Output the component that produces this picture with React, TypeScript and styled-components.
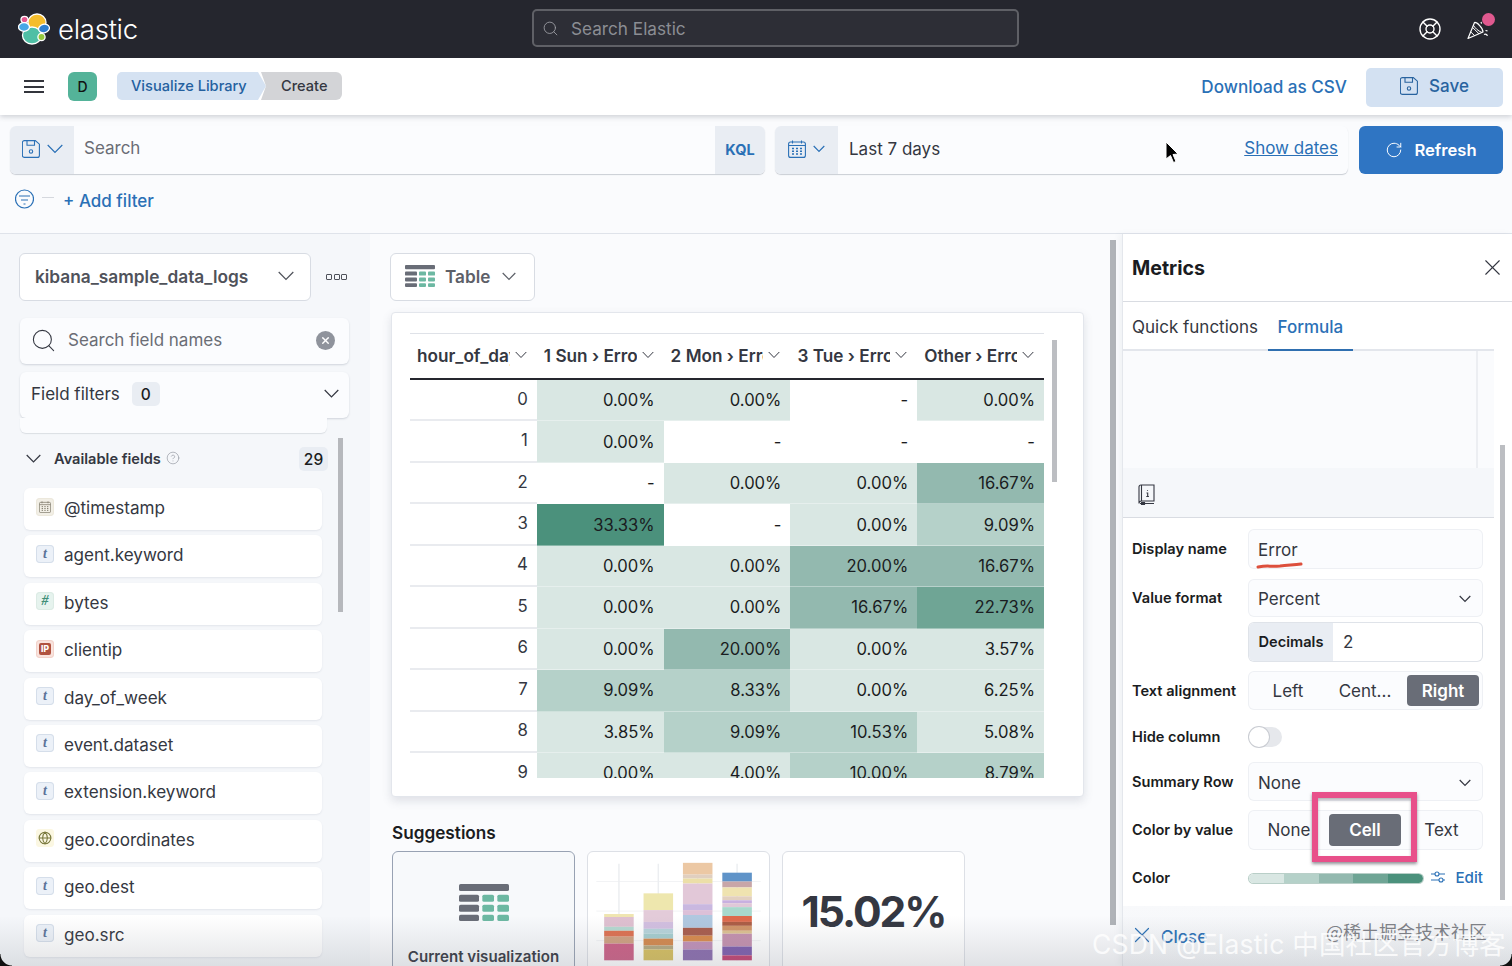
import React from 'react';
import styled, { createGlobalStyle } from 'styled-components';
import { LifeBuoy, RotateCw, Search, X, CircleHelp, Globe } from 'lucide-react';

const Global = createGlobalStyle`
  html, body { margin: 0; padding: 0; height: 100%; overflow: hidden; background: #fafbfd; }
  * { box-sizing: border-box; }
  body { font-family: Inter, "Noto Sans CJK SC", sans-serif; color: #343741; }
`;

const Page = styled.div`position: relative; width: 1512px; height: 966px; overflow: hidden; display: flex; flex-direction: column;`;

const Header = styled.header`height: 58px; background: #25262e; display: flex; align-items: center; padding: 0 18px; position: relative; flex: none;`;
const Brand = styled.div`display: flex; align-items: center; gap: 8px; width: 514px; color: #fff; font-size: 27.6px; font-weight: 300; letter-spacing: -0.3px;`;
const GlobalSearch = styled.div`width: 487px; height: 38px; margin-top: -2px; border: 2px solid #5f6066; border-radius: 5px; background: #2d2e36; display: flex; align-items: center; padding: 0 8px; gap: 12px; color: #8b8d93; font-size: 17.2px;`;
const HeaderIcons = styled.div`margin-left: auto; display: flex; align-items: center; gap: 25px; color: #fff; padding-right: 5px;`;
const BellWrap = styled.div`position: relative; display: flex;`;
const Dot = styled.span`position: absolute; width: 13px; height: 13px; right: -6px; top: -5px; border-radius: 50%; background: #e0598f;`;

const SubNav = styled.div`height: 57px; background: #fff; display: flex; align-items: center; padding: 0 9px 0 24px; box-shadow: 0 2px 5px rgba(60,65,80,.22); position: relative; z-index: 2; flex: none;`;
const Burger = styled.div`width: 20px; height: 13px; border-top: 2px solid #33353c; border-bottom: 2px solid #33353c; position: relative; margin-right: 24px;
  &::after { content: ''; position: absolute; left: 0; right: 0; top: 3.5px; height: 2px; background: #33353c; }`;
const Avatar = styled.div`width: 29px; height: 29px; background: #54b399; border-radius: 6px; display: flex; align-items: center; justify-content: center; color: #111; font-size: 14px; font-weight: 500; margin-right: 20px;`;
const Crumbs = styled.div`display: flex; height: 28px; margin-top: -1px; line-height: 26px;`;
const CrumbA = styled.div`width: 149px; background: #d5e2f2; color: #24609f; font-size: 14.6px; font-weight: 500; display: flex; align-items: center; padding: 0 0 1px 14px; border-radius: 5px 0 0 5px; clip-path: polygon(0 0, 141px 0, 100% 50%, 141px 100%, 0 100%);`;
const CrumbB = styled.div`width: 81px; margin-left: -5px; background: #d3d4d7; color: #343741; font-size: 14.6px; font-weight: 500; display: flex; align-items: center; padding: 0 0 1px 20px; border-radius: 0 6px 6px 0; clip-path: polygon(0 0, 100% 0, 100% 100%, 0 100%, 5px 50%);`;
const CsvLink = styled.div`margin-left: auto; color: #2a70b6; font-size: 17.1px; font-weight: 500; margin-right: 19px;`;
const SaveBtn = styled.div`width: 137px; height: 39px; background: #d3e1f2; border-radius: 5px; color: #28639f; font-size: 17px; font-weight: 500; display: flex; align-items: center; justify-content: center; gap: 11px; margin-top: 1px; padding-bottom: 2px;`;

const QueryArea = styled.div`height: 119px; background: #fafbfd; border-bottom: 1px solid #dfe3ea; padding: 11px 9px 0 10px; flex: none;`;
const QueryRow = styled.div`display: flex; height: 48px; gap: 10px;`;
const QueryGroup = styled.div<{ $w: number }>`display: flex; width: ${p => p.$w}px; height: 48px; border-radius: 6px; overflow: hidden; box-shadow: 0 1px 1px rgba(90,100,120,.3); background: #fbfcfe;`;
const Prepend = styled.div<{ $w: number }>`width: ${p => p.$w}px; background: #e9edf3; display: flex; align-items: center; justify-content: center; gap: 7px; color: #2a70b6; font-size: 14.5px; font-weight: 700; flex: none; padding-bottom: 2px;`;
const QueryInput = styled.div`flex: 1; display: flex; align-items: center; padding-left: 10px; color: #6a6d75; font-size: 17px; margin-top: -4px;`;
const DateText = styled.div`flex: 1; display: flex; align-items: center; padding: 0 11px; color: #343741; font-size: 17px; margin-top: -3px;`;
const ShowDates = styled.div`color: #2a70b6; font-size: 17px; text-decoration: underline; margin-right: 10px; display: flex; align-items: center; margin-top: -4px;`;
const RefreshBtn = styled.div`width: 144px; height: 48px; background: #2f75c3; border-radius: 6px; color: #fff; font-size: 16.6px; font-weight: 600; display: flex; align-items: center; justify-content: center; gap: 11px; margin-left: 1px;`;
const FilterRow = styled.div`display: flex; align-items: center; margin: 14px 0 0 5px; height: 22px; color: #2a70b6;`;
const Dash = styled.span`width: 12px; height: 1px; background: #d5d8de; margin: 0 9px 0 8px; position: relative; top: -2px;`;
const AddFilter = styled.span`font-size: 17px; font-weight: 500; position: relative; top: 2px;`;

const Main = styled.div`flex: 1; display: grid; grid-template-columns: 370px 752px 390px; min-height: 0; position: relative;`;

const Side = styled.aside`background: #f5f7fa; padding: 19px 21px 0 19px; position: relative; overflow: hidden;`;
const IndexRow = styled.div`display: flex; align-items: center; height: 48px;`;
const IndexPicker = styled.div`width: 292px; height: 48px; background: #fff; border: 1px solid #d8dce3; border-radius: 6px; display: flex; align-items: center; justify-content: space-between; padding: 0 16px 2px 15px; font-size: 17.3px; font-weight: 600; color: #4f525a;`;
const Dots = styled.div`display: flex; gap: 1.5px; margin-left: 15px;
  & span { width: 6px; height: 6px; border: 1.5px solid #4f525a; border-radius: 1px; }`;
const SearchBox = styled.div`margin: 17px 0 0 1px; height: 46px; width: 329px; background: #fbfcfe; border-radius: 6px; box-shadow: 0 1px 2px rgba(100,110,130,.25); display: flex; align-items: center; padding: 0 14px 2px 10px; gap: 11px; color: #6a6d75; font-size: 17px;`;
const ClearDot = styled.span`margin-left: auto; width: 19px; height: 19px; background: #8f939c; border-radius: 50%; display: flex; align-items: center; justify-content: center; color: #fff;`;
const FilterBox = styled(SearchBox)`margin-top: 8px; padding: 0 10px 2px 11px; color: #343741; gap: 12px; justify-content: flex-start;`;
const CountBadge = styled.span`background: #e9edf3; border-radius: 5px; font-size: 15.5px; font-weight: 500; color: #1a1c21; display: inline-flex; align-items: center; justify-content: center; height: 24px; min-width: 28px; padding: 0 4px;`;
const ChevEnd = styled.span`margin-left: auto; display: flex; color: #343741;`;
const Fragment_ = styled.div`margin: 0 0 0 1px; width: 307px; height: 15px; background: #fbfcfe; border-radius: 0 0 6px 6px; box-shadow: 0 1px 1px rgba(100,110,130,.18);`;
const AvailRow = styled.div`display: flex; align-items: center; width: 302px; margin: 14px 0 0 7px; height: 24px;`;
const AvailTitle = styled.span`font-size: 14.6px; font-weight: 600; color: #343741; margin-left: 13px; position: relative; top: 0;`;
const Help = styled.span`display: flex; margin-left: 5px; color: #8f939c; position: relative; top: -1px;`;
const AvailBadge = styled(CountBadge)`margin-left: auto; background: #e9edf3; min-width: 29px;`;
const FieldList = styled.div`display: flex; flex-direction: column; gap: 5.4px; margin: 17px 0 0 5px; width: 298px;`;
const FieldItem = styled.div`height: 42px; background: #fff; border-radius: 6px; box-shadow: 0 1px 2px rgba(100,110,130,.12); display: flex; align-items: center; padding: 0 0 3px 12px; gap: 10px; font-size: 17.1px; color: #343741;`;
const FieldToken = styled.span<{ $bg: string; $bd: string; $fg: string }>`width: 18px; height: 18px; flex: none; border-radius: 4px; background: ${p => p.$bg}; box-shadow: inset 0 0 0 1px ${p => p.$bd}; color: ${p => p.$fg}; display: flex; align-items: center; justify-content: center; font-family: "Liberation Serif", serif; font-size: 14px; font-weight: 700; font-style: italic; position: relative; top: -1px;`;
const IpGlyph = styled.span`background: #b0523f; color: #fff; width: 12px; height: 12px; border-radius: 2px; font-family: Inter, sans-serif; font-style: normal; font-size: 8.5px; font-weight: 800; display: flex; align-items: center; justify-content: center;`;
const SideScroll = styled.div`position: absolute; left: 338px; top: 204px; width: 5px; height: 174px; background: #b6b8bc;`;

const Center = styled.section`background: #fafbfd; padding: 19px 0 0 21px; position: relative; overflow: hidden;`;
const ChartType = styled.div`width: 145px; height: 48px; margin-left: -1px; background: #fff; border: 1px solid #d8dce3; border-radius: 6px; display: flex; align-items: center; padding: 0 15px 2px 14px; font-size: 17.2px; font-weight: 600; color: #5d6068; gap: 10px;
  & > svg:last-child { margin-left: 2px; }`;
const Card = styled.div`margin-top: 11px; width: 693px; height: 485px; background: #fff; border: 1px solid #e3e6ec; border-radius: 4px; box-shadow: 0 4px 10px rgba(80,90,110,.16); padding: 20px 0 0 18px; position: relative; overflow: hidden;`;
const TableWrap = styled.div`width: 634px; height: 445px; overflow: hidden;`;
const HeadRow = styled.div`display: grid; grid-template-columns: repeat(5, 126.8px); height: 47px; border-top: 1px solid #dfe2e8; border-bottom: 2px solid #25262e;`;
const HeadCell = styled.div`display: flex; align-items: center; padding: 0 10px 0 7px; font-size: 17.2px; font-weight: 600; color: #343741; gap: 5px; position: relative; top: -1px;`;
const HeadText = styled.span`flex: 1; min-width: 0; overflow: hidden; white-space: nowrap;`;
const BodyRow = styled.div`display: grid; grid-template-columns: repeat(5, 126.8px); height: 41.45px;`;
const RowHead = styled.div`border-bottom: 2px solid #e9ebef; display: flex; align-items: center; justify-content: flex-end; padding: 0 9px 2px 0; font-size: 16.8px; color: #343741;`;
const LEVELS = ['#fff', '#d9e7e3', '#b5d1c9', '#93b9af', '#6fa595', '#4b917c'];
const Cell = styled.div<{ $level: number }>`background: ${p => LEVELS[p.$level]}; display: flex; align-items: center; justify-content: flex-end; padding: 0 9px 1px 0; font-size: 16.6px; color: #1a1c21; box-shadow: inset 0 -1px 0 rgba(255,255,255,.35);`;
const TableScroll = styled.div`position: absolute; left: 660px; top: 27px; width: 5px; height: 142px; background: #bcbec2;`;
const SugTitle = styled.h3`margin: 25px 0 0 1px; font-size: 17.2px; line-height: 22px; font-weight: 600; color: #1a1c21;`;
const Suggestions = styled.div`display: flex; gap: 12px; margin: 7px 0 0 1px;`;
const SugCard = styled.div<{ $active?: boolean }>`width: 183px; height: 130px; border-radius: 6px; background: ${p => (p.$active ? '#f7f9fb' : '#fff')}; border: 1px solid ${p => (p.$active ? '#98a2b3' : '#dde0e6')}; display: flex; flex-direction: column; align-items: center; position: relative; overflow: hidden; flex: none;`;
const IconGap = styled.div`height: 32px; flex: none;`;
const SugLabel = styled.div`font-size: 15.1px; font-weight: 600; color: #343741; margin-top: 26px; white-space: nowrap;`;
const Metric = styled.div`font-size: 42.5px; font-weight: 700; color: #343741; margin-top: 28px; line-height: 64px; letter-spacing: -2px;`;
const MainScroll = styled.div`position: absolute; left: 740px; top: 6px; width: 6px; height: 685px; background: #b0b3b8;`;

const Panel = styled.section`background: #fff; border-left: 1px solid #e4e7ec; position: relative; overflow: hidden; display: flex; flex-direction: column; box-shadow: -3px 0 6px rgba(90,100,120,.06);`;
const PanelHead = styled.div`height: 68px; border-bottom: 1px solid #d9dce2; display: flex; align-items: center; justify-content: space-between; padding: 0 6px 0 9px; font-size: 19.6px; font-weight: 700; color: #1a1c21; flex: none;`;
const Tabs = styled.div`height: 49px; width: 371px; border-bottom: 2px solid #e3e6ec; display: flex; padding-left: 9px; flex: none; font-size: 17px; color: #343741; gap: 10px;`;
const Tab = styled.div<{ $on?: boolean }>`height: 49px; padding: ${p => (p.$on ? '2px 9.5px 0' : '0')}; display: flex; align-items: center; color: ${p => (p.$on ? '#2a70b6' : '#343741')}; font-weight: ${p => (p.$on ? 500 : 400)}; border-bottom: ${p => (p.$on ? '2px solid #2f6fb0' : 'none')};`;
const Editor = styled.div`height: 117px; width: 371px; background: #fafbfd; flex: none; padding-right: 16px;`;
const EditorInner = styled.div`height: 100%; border-right: 2px solid #eceef2;`;
const EditorBar = styled.div`height: 50px; width: 371px; background: #f5f7fa; border-bottom: 1px solid #d9dce2; display: flex; align-items: center; padding: 3px 0 0 15px; flex: none;`;
const Form = styled.div`padding: 12px 0 0 9px; display: flex; flex-direction: column;`;
const FormRow = styled.div<{ $h: number; $mt: number }>`display: grid; grid-template-columns: 117px 233px; column-gap: 0; align-items: center; height: ${p => p.$h}px; margin-top: ${p => p.$mt}px;`;
const Label = styled.div`font-size: 14.6px; font-weight: 600; color: #1a1c21; white-space: nowrap;`;
const Field = styled.div<{ $between?: boolean }>`height: 100%; background: #fbfcfe; border-radius: 5px; box-shadow: 0 0 0 1px #eef0f4; display: flex; align-items: center; justify-content: ${p => (p.$between ? 'space-between' : 'flex-start')}; padding: 2px 11px 0 9px; font-size: 17px; color: #343741; position: relative;`;
const Decimal = styled.div`height: 100%; border-radius: 5px; background: #fff; box-shadow: 0 0 0 1px #dfe3e9; display: flex; align-items: center; overflow: hidden; font-size: 17px; color: #343741;`;
const DecimalTag = styled.div`height: 100%; width: 84px; background: #e9edf3; display: flex; align-items: center; justify-content: center; font-size: 14.6px; font-weight: 600; color: #1a1c21; margin-right: 10px;`;
const Seg = styled.div<{ $cols: string; $pad: string }>`height: 100%; border-radius: 5px; background: #fbfcfe; box-shadow: 0 0 0 1px #eef0f4; display: grid; grid-template-columns: ${p => p.$cols}; padding: ${p => p.$pad}; font-size: 17px;`;
const SegBtn = styled.div<{ $on?: boolean }>`border-radius: 4px; display: flex; align-items: center; justify-content: center; background: ${p => (p.$on ? '#696d77' : 'transparent')}; color: ${p => (p.$on ? '#fff' : '#343741')}; font-weight: ${p => (p.$on ? 600 : 400)};`;
const Toggle = styled.div`width: 33px; height: 20px; border-radius: 10px; background: #e6e8ec; position: relative;
  &::after { content: ''; position: absolute; left: 0; top: 0; width: 20px; height: 20px; border-radius: 50%; background: #fff; box-shadow: 0 0 0 1px #c9ccd2; }`;
const ColorCell = styled.div`display: flex; align-items: center; justify-content: flex-start;`;
const Ramp = styled.div`width: 174px; height: 9px; border-radius: 5px; overflow: hidden; display: grid; grid-template-columns: repeat(5, 1fr); box-shadow: 0 0 0 1px #b9cfc8;`;
const RampStop = styled.span<{ $level: number }>`background: ${p => LEVELS[p.$level]};`;
const EditLink = styled.div`margin-left: auto; margin-right: -1px; display: flex; align-items: center; gap: 10px; color: #2a70b6; font-size: 15.2px; font-weight: 500; position: relative; top: -1px;`;
const PanelScroll = styled.div`position: absolute; left: 377px; top: 211px; width: 5px; height: 455px; background: #bcbec2;`;
const Footer = styled.div`position: absolute; left: 0; right: 0; top: 672px; bottom: 0; background: linear-gradient(#f8f9fb, #f3f5f8); display: flex; padding: 16px 0 0 6px; gap: 6px; color: #2a70b6; font-size: 17px; font-weight: 500;`;
const CloseText = styled.div`height: 19px; margin-top: 4px; overflow: hidden; line-height: 22px;`;

const Highlight = styled.div`position: absolute; left: 1312px; top: 792px; width: 105px; height: 70px; border: 6px solid #e8508a; box-shadow: 0 2px 3px rgba(40,40,50,.5), inset 0 2px 3px rgba(40,40,50,.35);`;
const Underline = styled.svg`position: absolute; left: 1256px; top: 560px;`;
const Cursor = styled.svg`position: absolute; left: 1164px; top: 141px; z-index: 3;`;
const BottomFade = styled.div`position: absolute; left: 0; right: 0; bottom: 0; height: 50px; background: linear-gradient(rgba(120,125,135,0), rgba(120,125,135,.2)); pointer-events: none;`;
const Mark1 = styled.div`position: absolute; left: 1326px; top: 920px; font-size: 18px; line-height: 22px; color: rgba(95,98,105,.8); white-space: nowrap; font-family: "Noto Sans CJK SC", sans-serif;`;
const Mark2 = styled.div`position: absolute; left: 1092px; top: 927px; font-size: 26.5px; line-height: 34px; color: rgba(255,255,255,.82); white-space: nowrap; letter-spacing: .2px; font-family: Inter, "Noto Sans CJK SC", sans-serif;`;
const CornerL = styled.div`position: absolute; left: 0; bottom: 0; width: 12px; height: 12px; background: radial-gradient(circle at 100% 0, transparent 11px, #111 12px);`;
const CornerR = styled.div`position: absolute; right: 0; bottom: 0; width: 12px; height: 12px; background: radial-gradient(circle at 0 0, transparent 11px, #111 12px);`;

const Chev = ({ s = 16, w = 1.2 }: { s?: number; w?: number }) => (
  <svg width={s} height={s / 2 + 2} viewBox={`0 0 ${s} ${s / 2 + 2}`} fill="none" stroke="currentColor" strokeWidth={w} style={{ flex: 'none' }}>
    <path d={`M0.7 1 L${s / 2} ${s / 2 + 0.5} L${s - 0.7} 1`} />
  </svg>
);

const SaveIcon = ({ s = 18 }: { s?: number }) => (
  <svg width={s} height={s} viewBox="0 0 18 18" fill="none" stroke="currentColor" strokeWidth="1.1">
    <path d="M2.5 .6h10.8l4.1 3.6v11.2a2 2 0 0 1-2 2h-13a2 2 0 0 1-2-2V2.6a2 2 0 0 1 2-2Z" />
    <path d="M5 .8v4.4h7.5V.8" />
    <circle cx="9" cy="11.5" r="1.7" />
  </svg>
);

const CalendarIcon = ({ s = 18 }: { s?: number }) => (
  <svg width={s} height={s} viewBox="0 0 18 18" fill="none" stroke="currentColor" strokeWidth="1.1">
    <rect x=".6" y="2" width="16.8" height="15.4" rx="2" />
    <path d="M.8 5.5h16.4M4.5 .5v3M13.5 .5v3" />
    <path d="M4 8.5h2M8 8.5h2M12 8.5h2M4 11.3h2M8 11.3h2M12 11.3h2M4 14h2M8 14h2M12 14h2" strokeWidth="1.4" />
  </svg>
);

const Popper = () => (
  <svg width="22" height="22" viewBox="0 0 22 22" fill="none" stroke="currentColor" strokeWidth="1.2" strokeLinejoin="round">
    <path d="M1 20.5 L7.5 4.5 C10 4 16 10 16 14 Z" />
    <path d="M5.6 9.5 L12 15.8 M3.8 14 L8 18 M6.2 7 C8 10 11 13 15 14.5" strokeWidth="1" />
    <path d="M17 16.5 c1.5-.8 3 0 3.5 1.3 M18.5 12.5 l2 .3 M14 4 l.6 1.6" />
  </svg>
);

const Logo = () => (
  <svg width="32" height="32" viewBox="0 0 32 32">
    <g stroke="#fff" strokeWidth="1.3">
      <ellipse cx="19" cy="9.5" rx="9" ry="8.5" fill="#f5bd2c" />
      <ellipse cx="14" cy="22.5" rx="9.5" ry="8.5" fill="#4fbfa5" />
      <ellipse cx="6.5" cy="6.5" rx="3.5" ry="3.2" fill="#e5588f" />
      <ellipse cx="6" cy="14" rx="5.5" ry="4.3" fill="#48a8e6" />
      <ellipse cx="26" cy="15.5" rx="5.5" ry="4.2" fill="#2f7fd0" transform="rotate(-15 26 15.5)" />
      <ellipse cx="23.5" cy="24" rx="3.6" ry="3.6" fill="#95c93d" />
    </g>
  </svg>
);

const TableIcon = ({ w, h }: { w: number; h: number }) => (
  <svg width={w} height={h} viewBox="0 0 30 24" preserveAspectRatio="none" style={{ flex: 'none' }}>
    <rect x="0" y="0" width="30" height="4.5" rx="1" fill="#696d77" />
    <g fill="#696d77">
      <rect x="0" y="7" width="12" height="4.5" rx="1" /><rect x="0" y="13.5" width="12" height="4.5" rx="1" /><rect x="0" y="20" width="12" height="4" rx="1" />
    </g>
    <g fill="#6cb8a2">
      <rect x="14" y="7" width="7" height="4.5" rx="1" /><rect x="14" y="13.5" width="7" height="4.5" rx="1" /><rect x="14" y="20" width="7" height="4" rx="1" />
      <rect x="23" y="7" width="7" height="4.5" rx="1" /><rect x="23" y="13.5" width="7" height="4.5" rx="1" /><rect x="23" y="20" width="7" height="4" rx="1" />
    </g>
  </svg>
);

const BAR_DATA: [number, [number, string][]][] = [
  [16, [[3, '#efe5b0'], [10, '#dfc0d0'], [4, '#b5d8d0'], [6, '#dd7050'], [7, '#cfa080'], [17, '#cc5f85']]],
  [56, [[17, '#eee7ae'], [12, '#e3cbd9'], [7, '#d2bfe0'], [5, '#b6d3da'], [5, '#a5cdcf'], [7, '#d4884c'], [4, '#b4a87f'], [11, '#d6bf5e']]],
  [96, [[12, '#ecc8a4'], [4, '#e0cfc0'], [5, '#ecdfa8'], [21, '#e2c8d8'], [6, '#c9b8e0'], [5, '#dcc0d8'], [13, '#b0c8e0'], [8, '#a85c4c'], [6, '#d8894a'], [8, '#c090b8'], [11, '#8a6cae']]],
  [136, [[9, '#5f93c8'], [6, '#c8a6a8'], [9, '#efe3b0'], [4, '#e2d0c0'], [3, '#c8b0e0'], [4, '#e0c8d8'], [9, '#a8d8cc'], [6, '#de6a4c'], [4, '#ac5c44'], [5, '#d09468'], [3, '#dcc090'], [13, '#c490ae'], [9, '#7c5cac'], [5, '#c04070']]],
];

const BarChart = () => {
  const bottom = 110;
  return (
    <svg width="183" height="130" viewBox="0 0 183 130">
      {[30, 60, 90].map(y => <line key={y} x1="8" x2="175" y1={y} y2={y} stroke="#f2f3f5" />)}
      {[31, 71, 111, 151].map(x => <line key={x} x1={x} x2={x} y1="12" y2="110" stroke="#eceef1" strokeWidth="1.5" />)}
      {BAR_DATA.map(([x, segs]) => {
        const sum = segs.reduce((a, s) => a + s[0], 0);
        let y = bottom - sum;
        return segs.map(([h, c], i) => {
          const r = <rect key={`${x}-${i}`} x={x} y={y} width="30" height={h} fill={c} />;
          y += h;
          return r;
        });
      })}
    </svg>
  );
};

const TokenT = () => <FieldToken $bg="#ecf1f8" $bd="#d5deea" $fg="#5b7399">t</FieldToken>;
const FIELDS: [string, React.ReactNode][] = [
  ['@timestamp', <FieldToken $bg="#f2efe6" $bd="#ece8dc" $fg="#7a7565"><CalendarIcon s={12} /></FieldToken>],
  ['agent.keyword', <TokenT />],
  ['bytes', <FieldToken $bg="#e6f3ee" $bd="#dcebe5" $fg="#3f8f78">#</FieldToken>],
  ['clientip', <FieldToken $bg="#f9e3dd" $bd="#f2d3cb" $fg="#b0523f"><IpGlyph>IP</IpGlyph></FieldToken>],
  ['day_of_week', <TokenT />],
  ['event.dataset', <TokenT />],
  ['extension.keyword', <TokenT />],
  ['geo.coordinates', <FieldToken $bg="#fbf7e2" $bd="#fbf7e2" $fg="#77773a"><Globe size={14} strokeWidth={1.8} /></FieldToken>],
  ['geo.dest', <TokenT />],
  ['geo.src', <TokenT />],
];

type C = [string, number];
const ROWS: C[][] = [
  [['0.00%', 1], ['0.00%', 1], ['-', 0], ['0.00%', 1]],
  [['0.00%', 1], ['-', 0], ['-', 0], ['-', 0]],
  [['-', 0], ['0.00%', 1], ['0.00%', 1], ['16.67%', 3]],
  [['33.33%', 5], ['-', 0], ['0.00%', 1], ['9.09%', 2]],
  [['0.00%', 1], ['0.00%', 1], ['20.00%', 3], ['16.67%', 3]],
  [['0.00%', 1], ['0.00%', 1], ['16.67%', 3], ['22.73%', 4]],
  [['0.00%', 1], ['20.00%', 3], ['0.00%', 1], ['3.57%', 1]],
  [['9.09%', 2], ['8.33%', 2], ['0.00%', 1], ['6.25%', 1]],
  [['3.85%', 1], ['9.09%', 2], ['10.53%', 2], ['5.08%', 1]],
  [['0.00%', 1], ['4.00%', 1], ['10.00%', 2], ['8.79%', 2]],
];
const HEADS = ['hour_of_day', '1 Sun › Error', '2 Mon › Error', '3 Tue › Error', 'Other › Error'];

export default function App() {
  return (
    <Page>
      <Global />
      <Header>
        <Brand><Logo /><span>elastic</span></Brand>
        <GlobalSearch><Search size={17} strokeWidth={1.2} color="#a0a2a8" />Search Elastic</GlobalSearch>
        <HeaderIcons>
          <LifeBuoy size={24} strokeWidth={1.4} />
          <BellWrap><Popper /><Dot /></BellWrap>
        </HeaderIcons>
      </Header>
      <SubNav>
        <Burger />
        <Avatar>D</Avatar>
        <Crumbs><CrumbA>Visualize Library</CrumbA><CrumbB>Create</CrumbB></Crumbs>
        <CsvLink>Download as CSV</CsvLink>
        <SaveBtn><SaveIcon />Save</SaveBtn>
      </SubNav>
      <QueryArea>
        <QueryRow>
          <QueryGroup $w={755}>
            <Prepend $w={64}><SaveIcon /><Chev s={16} /></Prepend>
            <QueryInput>Search</QueryInput>
            <Prepend $w={50}>KQL</Prepend>
          </QueryGroup>
          <QueryGroup $w={573}>
            <Prepend $w={63}><CalendarIcon /><Chev s={12} /></Prepend>
            <DateText>Last 7 days</DateText>
            <ShowDates>Show dates</ShowDates>
          </QueryGroup>
          <RefreshBtn><RotateCw size={18} strokeWidth={1.3} />Refresh</RefreshBtn>
        </QueryRow>
        <FilterRow>
          <svg width="19" height="20" viewBox="0 0 19 20" fill="none" stroke="currentColor" strokeWidth="1.2"><circle cx="9.5" cy="10" r="9" /><path d="M4 7h11M6 11h7M8.5 15h2" /></svg>
          <Dash />
          <AddFilter>+ Add filter</AddFilter>
        </FilterRow>
      </QueryArea>
      <Main>
        <Side>
          <IndexRow>
            <IndexPicker>kibana_sample_data_logs<Chev s={16} /></IndexPicker>
            <Dots><span /><span /><span /></Dots>
          </IndexRow>
          <SearchBox><Search size={27} strokeWidth={0.95} color="#343741" />Search field names<ClearDot><X size={11} strokeWidth={3} /></ClearDot></SearchBox>
          <FilterBox>Field filters<CountBadge>0</CountBadge><ChevEnd><Chev s={15} /></ChevEnd></FilterBox>
          <Fragment_ />
          <AvailRow>
            <Chev s={15} />
            <AvailTitle>Available fields</AvailTitle>
            <Help><CircleHelp size={14} strokeWidth={1.1} /></Help>
            <AvailBadge>29</AvailBadge>
          </AvailRow>
          <FieldList>
            {FIELDS.map(([n, t]) => <FieldItem key={n}>{t}{n}</FieldItem>)}
          </FieldList>
          <SideScroll />
        </Side>
        <Center>
          <ChartType><TableIcon w={30} h={22} />Table<Chev s={14} /></ChartType>
          <Card>
            <TableWrap>
              <HeadRow>
                {HEADS.map(h => <HeadCell key={h}><HeadText>{h}</HeadText><Chev s={12} w={1} /></HeadCell>)}
              </HeadRow>
              {ROWS.map((r, i) => (
                <BodyRow key={i}>
                  <RowHead>{i}</RowHead>
                  {r.map(([t, l], j) => <Cell key={j} $level={l}>{t}</Cell>)}
                </BodyRow>
              ))}
            </TableWrap>
            <TableScroll />
          </Card>
          <SugTitle>Suggestions</SugTitle>
          <Suggestions>
            <SugCard $active>
              <IconGap />
              <TableIcon w={50} h={37} />
              <SugLabel>Current visualization</SugLabel>
            </SugCard>
            <SugCard><BarChart /></SugCard>
            <SugCard><Metric>15.02%</Metric></SugCard>
          </Suggestions>
          <MainScroll />
        </Center>
        <Panel>
          <PanelHead>Metrics<X size={27} strokeWidth={1} color="#343741" /></PanelHead>
          <Tabs><Tab>Quick functions</Tab><Tab $on>Formula</Tab></Tabs>
          <Editor><EditorInner /></Editor>
          <EditorBar>
            <svg width="18" height="21" viewBox="0 0 18 21" fill="none" stroke="#343741" strokeWidth="1.1">
              <path d="M3 1h13v16H3.5C2 17 1 18 1 19.5V3c0-1 1-2 2-2Z" /><path d="M3.5 1v16M2 19.5h14" /><rect x="3.5" y="18.5" width="3" height="2" fill="#343741" /><path d="M9.5 6v.8M8.5 9h1.2v3.5M8.3 12.5h2.6" />
            </svg>
          </EditorBar>
          <Form>
            <FormRow $h={38} $mt={0}><Label>Display name</Label><Field>Error</Field></FormRow>
            <FormRow $h={36} $mt={12}><Label>Value format</Label><Field $between>Percent<Chev s={12} /></Field></FormRow>
            <FormRow $h={38} $mt={7}><span /><Decimal><DecimalTag>Decimals</DecimalTag>2</Decimal></FormRow>
            <FormRow $h={37} $mt={11}><Label>Text alignment</Label><Seg $cols="70px 84px 72px" $pad="3px 3px 3px 4px"><SegBtn>Left</SegBtn><SegBtn>Cent...</SegBtn><SegBtn $on>Right</SegBtn></Seg></FormRow>
            <FormRow $h={20} $mt={18}><Label>Hide column</Label><Toggle /></FormRow>
            <FormRow $h={37} $mt={16}><Label>Summary Row</Label><Field $between>None<Chev s={12} /></Field></FormRow>
            <FormRow $h={38} $mt={11}><Label>Color by value</Label><Seg $cols="80px 72px 81px" $pad="3px 0"><SegBtn>None</SegBtn><SegBtn $on>Cell</SegBtn><SegBtn>Text</SegBtn></Seg></FormRow>
            <FormRow $h={20} $mt={19}>
              <Label>Color</Label>
              <ColorCell>
                <Ramp>{[1, 2, 3, 4, 5].map(l => <RampStop key={l} $level={l} />)}</Ramp>
                <EditLink>
                  <svg width="14" height="12" viewBox="0 0 14 12" fill="none" stroke="currentColor" strokeWidth="1.1"><path d="M0 3h4M8 3h6M0 9h8M12 9h2" /><circle cx="6" cy="3" r="2" /><circle cx="10" cy="9" r="2" /></svg>
                  Edit
                </EditLink>
              </ColorCell>
            </FormRow>
          </Form>
          <PanelScroll />
          <Footer><X size={26} strokeWidth={1.1} /><CloseText>Close</CloseText></Footer>
        </Panel>
      </Main>
      <BottomFade />
      <Underline width="48" height="10" viewBox="0 0 48 10"><path d="M2 7 C14 5 12 7 24 6 C32 5 38 5 45 4" stroke="#dd4f3c" strokeWidth="3" fill="none" strokeLinecap="round" /></Underline>
      <Highlight />
      <Cursor width="16" height="24" viewBox="0 0 16 24"><path d="M2 1 L2 18 L6.5 14.5 L9.5 21.5 L12 20.5 L9 13.5 L14 13 Z" fill="#000" stroke="#fff" strokeWidth="1" /></Cursor>
      <Mark1>@稀土掘金技术社区</Mark1>
      <Mark2>CSDN @Elastic 中国社区官方博客</Mark2>
      <CornerL />
      <CornerR />
    </Page>
  );
}
